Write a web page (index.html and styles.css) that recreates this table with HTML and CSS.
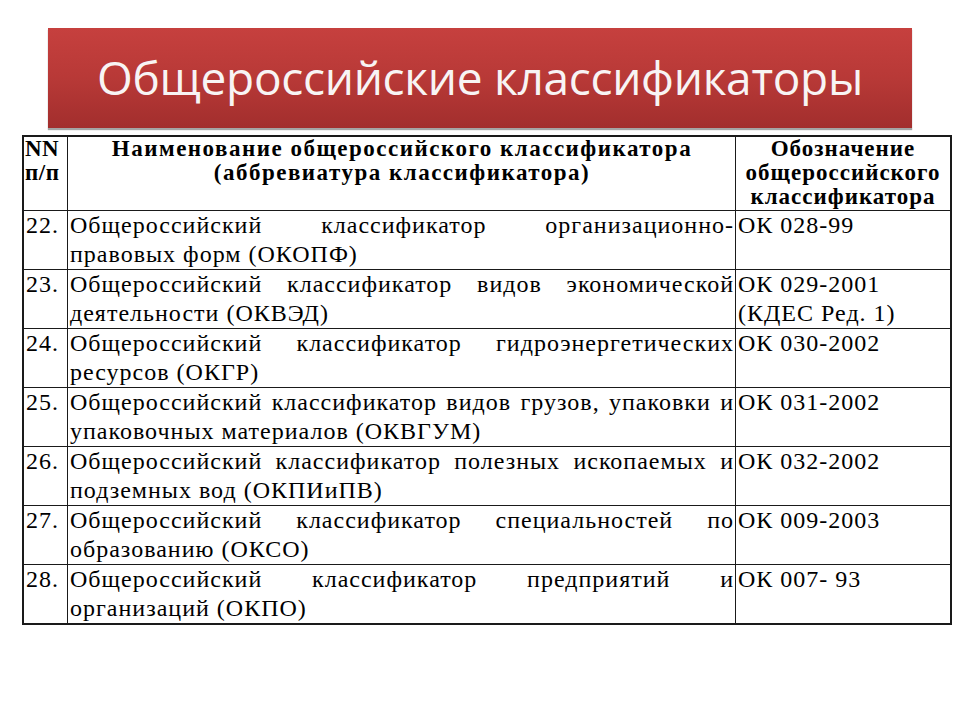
FILE: index.html
```html
<!DOCTYPE html>
<html>
<head>
<meta charset="utf-8">
<title>Общероссийские классификаторы</title>
<link rel="stylesheet" href="styles.css">
</head>
<body>
<div class="page">
  <header class="banner"><h1 class="banner-text">Общероссийские классификаторы</h1></header>
  <div class="okt" role="table">
    <div class="okt-row" role="row">
      <div class="okt-hd okt-hnum" role="columnheader">NN<br>п/п</div>
      <div class="okt-hd okt-hname" role="columnheader">Наименование общероссийского классификатора<br>(аббревиатура классификатора)</div>
      <div class="okt-hd okt-hcode" role="columnheader">Обозначение общероссийского классификатора</div>
    </div>
    <div class="okt-row" role="row"><div class="okt-td okt-num">22.</div><div class="okt-td okt-name">Общероссийский классификатор организационно-правовых форм (ОКОПФ)</div><div class="okt-td okt-code">ОК 028-99</div></div>
    <div class="okt-row" role="row"><div class="okt-td okt-num">23.</div><div class="okt-td okt-name">Общероссийский классификатор видов экономической деятельности (ОКВЭД)</div><div class="okt-td okt-code">ОК 029-2001 (КДЕС Ред. 1)</div></div>
    <div class="okt-row" role="row"><div class="okt-td okt-num">24.</div><div class="okt-td okt-name">Общероссийский классификатор гидроэнергетических ресурсов (ОКГР)</div><div class="okt-td okt-code">ОК 030-2002</div></div>
    <div class="okt-row" role="row"><div class="okt-td okt-num">25.</div><div class="okt-td okt-name">Общероссийский классификатор видов грузов, упаковки и упаковочных материалов (ОКВГУМ)</div><div class="okt-td okt-code">ОК 031-2002</div></div>
    <div class="okt-row" role="row"><div class="okt-td okt-num">26.</div><div class="okt-td okt-name">Общероссийский классификатор полезных ископаемых и подземных вод (ОКПИиПВ)</div><div class="okt-td okt-code">ОК 032-2002</div></div>
    <div class="okt-row" role="row"><div class="okt-td okt-num">27.</div><div class="okt-td okt-name">Общероссийский классификатор специальностей по образованию (ОКСО)</div><div class="okt-td okt-code">ОК 009-2003</div></div>
    <div class="okt-row" role="row"><div class="okt-td okt-num">28.</div><div class="okt-td okt-name">Общероссийский классификатор предприятий и организаций (ОКПО)</div><div class="okt-td okt-code">ОК 007- 93</div></div>
  </div>
</div>
</body>
</html>
```
FILE: styles.css
```css
html, body {
  margin: 0;
  padding: 0;
  background: #ffffff;
}
body {
  font-family: "Liberation Serif", "Times New Roman", serif;
}
.page {
  width: 960px;
  height: 720px;
  padding-top: 28px;
  box-sizing: border-box;
}
.banner {
  margin-left: 48px;
  width: 864px;
  height: 100px;
  background: linear-gradient(to bottom, #c6403e 0%, #b83937 50%, #a22e2d 100%);
  box-shadow: 0 2px 1px rgba(90, 90, 90, 0.55);
  display: flex;
  align-items: center;
  justify-content: center;
}
.banner-text {
  margin: 0;
  font-family: "Open Sans", sans-serif;
  font-weight: 400;
  font-size: 46px;
  color: #f8f4f4;
  letter-spacing: -0.3px;
  line-height: 1;
  padding-bottom: 2px;
}
.okt {
  margin-top: 7px;
  margin-left: 22px;
  width: 930px;
  box-sizing: border-box;
  border: 2px solid #1a1a1a;
  color: #000;
  font-family: "Liberation Serif", "Times New Roman", serif;
}
.okt-row {
  display: grid;
  grid-template-columns: 43px 668px 1fr;
  border-bottom: 1px solid #1a1a1a;
}
.okt-row:last-child {
  border-bottom: none;
}
.okt-hd, .okt-td {
  box-sizing: border-box;
  padding: 0 1px 0 2px;
  font-family: "Liberation Serif", "Times New Roman", serif;
}
.okt-hd + .okt-hd, .okt-td + .okt-td {
  border-left: 1px solid #1a1a1a;
}
.okt-hd {
  font-weight: 700;
  font-size: 23px;
  line-height: 24px;
  letter-spacing: 1.5px;
  height: 73px;
}
.okt-hnum {
  padding-left: 1px;
  letter-spacing: 0.5px;
  white-space: nowrap;
}
.okt-hname { text-align: center; }
.okt-hcode { text-align: center; letter-spacing: 1px; padding: 0; }
.okt-td {
  font-weight: 400;
  font-size: 24px;
  line-height: 29px;
  letter-spacing: 1px;
  min-height: 58px;
}
.okt-num { text-align: left; white-space: nowrap; }
.okt-name { text-align: justify; padding-left: 2px; }
.okt-code { text-align: left; }
```
